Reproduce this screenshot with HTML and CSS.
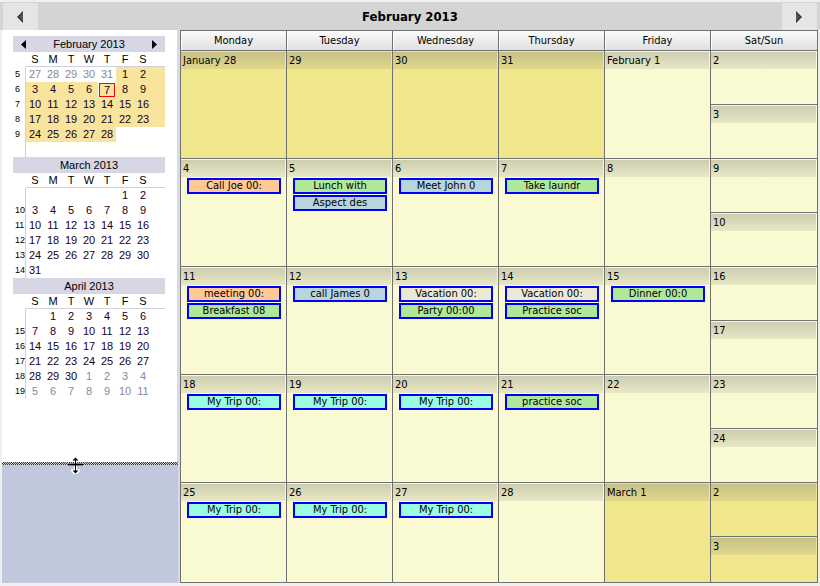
FILE: index.html
```html
<!DOCTYPE html>
<html>
<head>
<meta charset="utf-8">
<link rel="stylesheet" href="styles.css">
</head>
<body>
<div class="toolbar">
  <div class="navbtn"><svg width="7" height="12" viewBox="0 0 7 12"><polygon points="6,0 0,6 6,12" fill="#333"/><polygon points="6,2 2,6 6,10" fill="#555"/></svg></div>
  <div class="title">February 2013</div>
  <div class="navbtn"><svg width="7" height="12" viewBox="0 0 7 12"><polygon points="0,0 6,6 0,12" fill="#333"/><polygon points="0,2 4,6 0,10" fill="#555"/></svg></div>
</div>
<div class="content">
  <div class="left">
    <div class="cal-pane">
      <div class="mini">
        <div class="mhead"><svg class="marr" width="5" height="9" viewBox="0 0 5 9"><polygon points="5,0 0,4.5 5,9" fill="#000"/></svg><span>February 2013</span><svg class="marr" width="5" height="9" viewBox="0 0 5 9"><polygon points="0,0 5,4.5 0,9" fill="#000"/></svg></div>
        <div class="mgrid">
          <span></span><span class="n">S</span><span class="n">M</span><span class="n">T</span><span class="n">W</span><span class="n">T</span><span class="n">F</span><span class="n">S</span><span class="n"></span>
          <span class="wn">5</span><span class="d g">27</span><span class="d g">28</span><span class="d g">29</span><span class="d g">30</span><span class="d g">31</span><span class="d c">1</span><span class="d c">2</span><span class="c"></span>
          <span class="wn">6</span><span class="d c">3</span><span class="d c">4</span><span class="d c">5</span><span class="d c">6</span><span class="d c today">7</span><span class="d c">8</span><span class="d c">9</span><span class="c"></span>
          <span class="wn">7</span><span class="d c">10</span><span class="d c">11</span><span class="d c">12</span><span class="d c">13</span><span class="d c">14</span><span class="d c">15</span><span class="d c">16</span><span class="c"></span>
          <span class="wn">8</span><span class="d c">17</span><span class="d c">18</span><span class="d c">19</span><span class="d c">20</span><span class="d c">21</span><span class="d c">22</span><span class="d c">23</span><span class="c"></span>
          <span class="wn">9</span><span class="d c">24</span><span class="d c">25</span><span class="d c">26</span><span class="d c">27</span><span class="d c">28</span><span class="d"></span><span class="d"></span><span></span>
          <span class="wn"></span><span class="d"></span><span class="d"></span><span class="d"></span><span class="d"></span><span class="d"></span><span class="d"></span><span class="d"></span><span></span>
        </div>
      </div>
      <div class="mini">
        <div class="mhead"><span>March 2013</span></div>
        <div class="mgrid">
          <span></span><span class="n">S</span><span class="n">M</span><span class="n">T</span><span class="n">W</span><span class="n">T</span><span class="n">F</span><span class="n">S</span><span class="n"></span>
          <span class="wn"></span><span class="d"></span><span class="d"></span><span class="d"></span><span class="d"></span><span class="d"></span><span class="d">1</span><span class="d">2</span><span></span>
          <span class="wn">10</span><span class="d">3</span><span class="d">4</span><span class="d">5</span><span class="d">6</span><span class="d">7</span><span class="d">8</span><span class="d">9</span><span></span>
          <span class="wn">11</span><span class="d">10</span><span class="d">11</span><span class="d">12</span><span class="d">13</span><span class="d">14</span><span class="d">15</span><span class="d">16</span><span></span>
          <span class="wn">12</span><span class="d">17</span><span class="d">18</span><span class="d">19</span><span class="d">20</span><span class="d">21</span><span class="d">22</span><span class="d">23</span><span></span>
          <span class="wn">13</span><span class="d">24</span><span class="d">25</span><span class="d">26</span><span class="d">27</span><span class="d">28</span><span class="d">29</span><span class="d">30</span><span></span>
          <span class="wn">14</span><span class="d">31</span><span class="d"></span><span class="d"></span><span class="d"></span><span class="d"></span><span class="d"></span><span class="d"></span><span></span>
        </div>
      </div>
      <div class="mini">
        <div class="mhead"><span>April 2013</span></div>
        <div class="mgrid">
          <span></span><span class="n">S</span><span class="n">M</span><span class="n">T</span><span class="n">W</span><span class="n">T</span><span class="n">F</span><span class="n">S</span><span class="n"></span>
          <span class="wn"></span><span class="d"></span><span class="d">1</span><span class="d">2</span><span class="d">3</span><span class="d">4</span><span class="d">5</span><span class="d">6</span><span></span>
          <span class="wn">15</span><span class="d">7</span><span class="d">8</span><span class="d">9</span><span class="d">10</span><span class="d">11</span><span class="d">12</span><span class="d">13</span><span></span>
          <span class="wn">16</span><span class="d">14</span><span class="d">15</span><span class="d">16</span><span class="d">17</span><span class="d">18</span><span class="d">19</span><span class="d">20</span><span></span>
          <span class="wn">17</span><span class="d">21</span><span class="d">22</span><span class="d">23</span><span class="d">24</span><span class="d">25</span><span class="d">26</span><span class="d">27</span><span></span>
          <span class="wn">18</span><span class="d">28</span><span class="d">29</span><span class="d">30</span><span class="d g">1</span><span class="d g">2</span><span class="d g">3</span><span class="d g">4</span><span></span>
          <span class="wn">19</span><span class="d g">5</span><span class="d g">6</span><span class="d g">7</span><span class="d g">8</span><span class="d g">9</span><span class="d g">10</span><span class="d g">11</span><span></span>
        </div>
      </div>
    </div>
    <div class="hsplit"></div>
    <div class="lower"></div>
    <svg class="cursor" width="17" height="17" viewBox="0 0 17 17">
      <g stroke="#fff" stroke-width="3" fill="#fff" stroke-linejoin="round">
        <line x1="8.5" y1="2" x2="8.5" y2="15"/>
        <line x1="1" y1="7.5" x2="16" y2="7.5"/>
        <polygon points="8.5,0.5 5.5,3.5 11.5,3.5"/>
        <polygon points="8.5,16.5 5.5,13.5 11.5,13.5"/>
      </g>
      <g fill="#000">
        <rect x="8" y="2" width="1" height="13"/>
        <rect x="1" y="6.5" width="15" height="2"/>
        <polygon points="8.5,0.5 5.5,3.5 11.5,3.5"/>
        <polygon points="8.5,16.5 5.5,13.5 11.5,13.5"/>
      </g>
    </svg>
  </div>
  <div class="sash"></div>
  <div class="month">
    <div class="dh">Monday</div><div class="dh">Tuesday</div><div class="dh">Wednesday</div><div class="dh">Thursday</div><div class="dh">Friday</div><div class="dh">Sat/Sun</div>

    <div class="cell other"><div class="dbar">January 28</div></div>
    <div class="cell other"><div class="dbar">29</div></div>
    <div class="cell other"><div class="dbar">30</div></div>
    <div class="cell other"><div class="dbar">31</div></div>
    <div class="cell"><div class="dbar">February 1</div></div>
    <div class="wknd"><div class="half"><div class="dbar">2</div></div><div class="half"><div class="dbar">3</div></div></div>

    <div class="cell"><div class="dbar">4</div><div class="ev peach">Call Joe 00:</div></div>
    <div class="cell"><div class="dbar">5</div><div class="ev green">Lunch with</div><div class="ev blue">Aspect des</div></div>
    <div class="cell"><div class="dbar">6</div><div class="ev blue">Meet John 0</div></div>
    <div class="cell"><div class="dbar">7</div><div class="ev green">Take laundr</div></div>
    <div class="cell"><div class="dbar">8</div></div>
    <div class="wknd"><div class="half"><div class="dbar">9</div></div><div class="half"><div class="dbar">10</div></div></div>

    <div class="cell"><div class="dbar">11</div><div class="ev peach">meeting 00:</div><div class="ev green">Breakfast 08</div></div>
    <div class="cell"><div class="dbar">12</div><div class="ev blue">call James 0</div></div>
    <div class="cell"><div class="dbar">13</div><div class="ev beige">Vacation 00:</div><div class="ev green">Party 00:00</div></div>
    <div class="cell"><div class="dbar">14</div><div class="ev beige">Vacation 00:</div><div class="ev green">Practice soc</div></div>
    <div class="cell"><div class="dbar">15</div><div class="ev green">Dinner 00:0</div></div>
    <div class="wknd"><div class="half"><div class="dbar">16</div></div><div class="half"><div class="dbar">17</div></div></div>

    <div class="cell"><div class="dbar">18</div><div class="ev aqua">My Trip 00:</div></div>
    <div class="cell"><div class="dbar">19</div><div class="ev aqua">My Trip 00:</div></div>
    <div class="cell"><div class="dbar">20</div><div class="ev aqua">My Trip 00:</div></div>
    <div class="cell"><div class="dbar">21</div><div class="ev green">practice soc</div></div>
    <div class="cell"><div class="dbar">22</div></div>
    <div class="wknd"><div class="half"><div class="dbar">23</div></div><div class="half"><div class="dbar">24</div></div></div>

    <div class="cell"><div class="dbar">25</div><div class="ev aqua">My Trip 00:</div></div>
    <div class="cell"><div class="dbar">26</div><div class="ev aqua">My Trip 00:</div></div>
    <div class="cell"><div class="dbar">27</div><div class="ev aqua">My Trip 00:</div></div>
    <div class="cell"><div class="dbar">28</div></div>
    <div class="cell other"><div class="dbar">March 1</div></div>
    <div class="wknd other"><div class="half"><div class="dbar">2</div></div><div class="half"><div class="dbar">3</div></div></div>
  </div>
</div>
</body>
</html>
```
FILE: styles.css
```css
html, body {
  margin: 0;
  padding: 0;
}
body {
  width: 820px;
  height: 586px;
  overflow: hidden;
  background: #f0f0f0;
  font-family: "DejaVu Sans Condensed", "DejaVu Sans", sans-serif;
  font-stretch: condensed;
  font-size: 11px;
  color: #000;
}
.toolbar {
  margin-top: 2px;
  height: 28px;
  background: #d4d4d4;
  display: flex;
  align-items: flex-start;
  padding: 1px 3px 0 3px;
  box-sizing: border-box;
}
.navbtn {
  width: 35px;
  height: 27px;
  background: #e5e5e5;
  display: flex;
  align-items: center;
  justify-content: center;
}
.navbtn svg { margin-top: 0; }
.title {
  flex: 1;
  text-align: center;
  font-weight: bold;
  font-size: 13px;
  line-height: 27px;
}
.content {
  display: flex;
  height: 553px;
}
.left {
  margin-left: 2px;
  width: 176px;
  display: flex;
  flex-direction: column;
  position: relative;
}
.cal-pane {
  height: 432px;
  background: #fff;
  border-right: 1px solid #d8d8e6;
  padding: 6px 0 0 11px;
  box-sizing: border-box;
}
.hsplit {
  height: 3px;
  background: repeating-conic-gradient(#3a3a3a 0 25%, #d0d0d0 0 50%) 0 0 / 2px 2px;
}
.lower {
  flex: 1;
  background: #c0c8dc;
}
.cursor {
  position: absolute;
  left: 65px;
  top: 427px;
}
.sash {
  width: 2px;
  background: #d8d8e6;
}
.mini {
  width: 152px;
  font-family: "Liberation Sans", Arial, sans-serif;
  font-stretch: normal;
  font-size: 11px;
}
.mhead {
  height: 16px;
  background: #d6d6e4;
  display: flex;
  align-items: center;
  justify-content: center;
  position: relative;
  line-height: 16px;
}
.mhead .marr {
  position: absolute;
  top: 4px;
}
.mhead .marr:first-child { left: 8px; }
.mhead .marr:last-child { right: 8px; }
.mgrid {
  display: grid;
  grid-template-columns: 13px repeat(7, 18px) 13px;
  grid-template-rows: repeat(7, 15px);
  line-height: 15px;
  text-align: center;
}
.mgrid .n {
  border-bottom: 1px solid #cfd0dc;
  line-height: 14px;
  box-sizing: border-box;
}
.mgrid .wn {
  border-right: 1px solid #cfd0dc;
  font-size: 9px;
  text-align: left;
  padding-left: 2px;
  line-height: 15px;
}
.mgrid .d { color: #1a001a; }
.mgrid .g { color: #8a8a96; }
.mgrid .c { background: #f8e49c; }
.mgrid .today {
  margin: 1px 1px 0 1px;
  box-shadow: inset 0 0 0 1px #ff0000;
  line-height: 14px;
}
.month {
  display: grid;
  grid-template-columns: repeat(5, 105px) 106px;
  grid-template-rows: 19px repeat(4, 107px) 99px;
  gap: 1px;
  background: #707070;
  border: 1px solid #707070;
  width: 638px;
  box-sizing: border-box;
}
.dh {
  background: linear-gradient(#fbfbfb, #e0e0e0);
  box-shadow: inset 1px 0 0 #fff;
  text-align: center;
  line-height: 19px;
}
.cell, .half {
  background: #fafad2;
  overflow: hidden;
}
.other, .other .half {
  background: #f0e68c;
}
.wknd {
  display: flex;
  flex-direction: column;
  gap: 1px;
  overflow: hidden;
  background: #707070;
}
.half {
  flex: 0 0 53px;
}
.dbar {
  margin: 1px 1px 0 0;
  height: 17px;
  line-height: 17px;
  padding-left: 2px;
  background: linear-gradient(rgba(130,130,120,0.38), rgba(150,150,140,0.18));
  white-space: nowrap;
}
.ev {
  margin: 1px 0 0 6px;
  width: 94px;
  height: 16px;
  box-sizing: border-box;
  border: 2px solid #0000ff;
  text-align: center;
  line-height: 12px;
  white-space: nowrap;
  overflow: hidden;
}
.ev + .ev { margin-top: 1px; }
.peach { background: #ffc896; }
.green { background: #b0e89a; }
.blue { background: #b8d4dc; }
.beige { background: #ece8d4; }
.aqua { background: #9cfce2; }
```
